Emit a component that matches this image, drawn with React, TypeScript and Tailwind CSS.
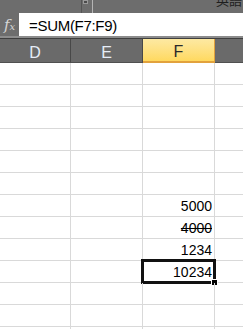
const cols = [
  { key: 'D', w: 'w-[71px]' },
  { key: 'E', w: 'w-[72px]' },
  { key: 'F', w: 'w-[72px]' },
];

const values: Record<number, { text: string; strike?: boolean; selected?: boolean }> = {
  6: { text: '5000' },
  7: { text: '4000', strike: true },
  8: { text: '1234' },
  9: { text: '10234', selected: true },
};

const font = { fontFamily: '"Liberation Sans", Arial, sans-serif' };

function TopBar() {
  return (
    <div className="flex h-[13px] bg-[#6d6d6d] overflow-hidden">
      <div className="w-[82px] h-full border-r border-[#555]" />
      <div className="w-[11px] h-full border-r border-[#b5b5b5] flex justify-start">
        <div className="w-[5px] h-[4px] bg-[#4b4b4b] border border-[#9a9a9a] ml-[1px]" />
      </div>
      <div className="flex-1 flex justify-end pr-[1px]">
        <span
          className="text-[13px] leading-[13px] text-[#1e1e1e] -mt-[7px]"
          style={{ fontFamily: '"Noto Sans CJK TC", sans-serif' }}
        >
          英語
        </span>
      </div>
    </div>
  );
}

function FormulaBar() {
  return (
    <div className="flex h-[23px]">
      <div className="w-[19px] bg-[#6d6d6d] flex justify-center overflow-hidden">
        <span
          className="italic text-[#d6d6d6] text-[15px] leading-[24px]"
          style={{ fontFamily: '"DejaVu Serif", serif' }}
        >
          f<span className="text-[10px]">x</span>
        </span>
      </div>
      <div className="flex-1 bg-white pl-[10px] overflow-hidden">
        <span className="text-[15px] leading-[25px] text-black tracking-[-0.3px]" style={font}>
          =SUM(F7:F9)
        </span>
      </div>
    </div>
  );
}

function Header() {
  return (
    <>
      <div className="h-[2px] bg-[#8c8c8c]" />
      <div className="flex h-[25px] border-t border-[#3e3e3e] bg-[#6a6a6a]">
        {cols.map((c) =>
          c.key === 'F' ? (
            <div
              key={c.key}
              className={`${c.w} h-[24px] border-r border-b-2 border-[#e2a23c] bg-gradient-to-b from-[#fde9a2] to-[#ffd95e] text-center text-[16px] leading-[26px] text-[#2a2a2a] overflow-hidden`}
              style={font}
            >
              {c.key}
            </div>
          ) : (
            <div
              key={c.key}
              className={`${c.w} h-[24px] border-r border-b border-r-[#484848] border-b-[#505050] text-center text-[16px] leading-[27px] text-[#e6edf7] overflow-hidden`}
              style={font}
            >
              {c.key}
            </div>
          ),
        )}
        <div className="flex-1 h-[24px] border-b border-[#505050]" />
      </div>
    </>
  );
}

function Row({ i }: { i: number }) {
  const v = values[i];
  return (
    <div className="flex h-[22px]">
      {cols.map((c) => (
        <div key={c.key} className={`${c.w} h-[22px] border-r border-b border-[#d9d9d9] relative`}>
          {c.key === 'F' && v ? (
            <>
              <div
                className={`h-[21px] pr-[2px] text-right text-[14px] leading-[23px] text-black overflow-hidden ${v.strike ? 'line-through' : ''}`}
                style={font}
              >
                {v.text}
              </div>
              {v.selected ? (
                <>
                  <div className="absolute left-[-2px] top-[-2px] w-[75px] h-[25px] border-[3px] border-[#111]" />
                  <div className="absolute left-[68px] top-[18px] w-[7px] h-[7px] bg-black border border-white" />
                </>
              ) : null}
            </>
          ) : null}
        </div>
      ))}
      <div className="flex-1 h-[22px] border-b border-[#d9d9d9]" />
    </div>
  );
}

export default function App() {
  return (
    <div className="w-[243px] h-[329px] overflow-hidden bg-white">
      <TopBar />
      <FormulaBar />
      <Header />
      {Array.from({ length: 13 }, (_, i) => (
        <Row key={i} i={i} />
      ))}
    </div>
  );
}
